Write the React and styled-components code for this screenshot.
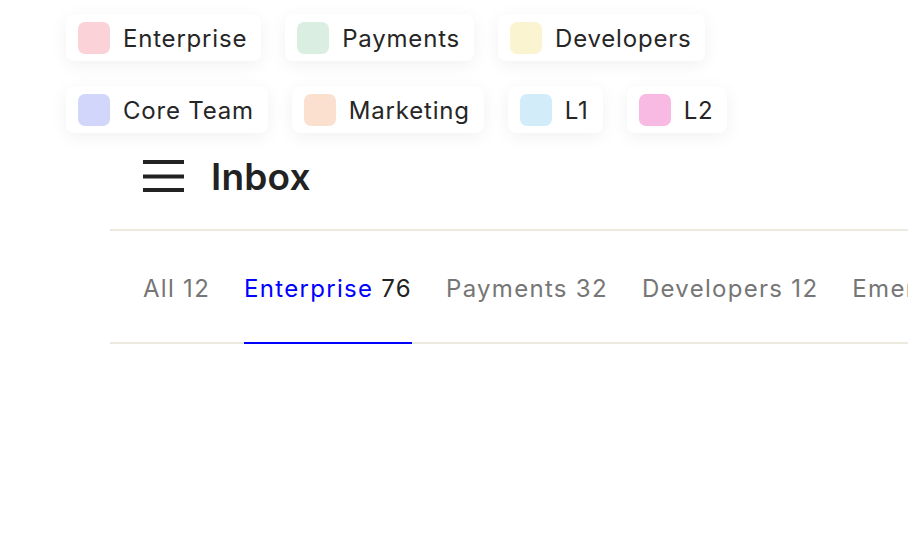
import styled, { createGlobalStyle } from "styled-components";

const labelRows = [
  [
    { name: "Enterprise", color: "#fbd2d8" },
    { name: "Payments", color: "#daeee2" },
    { name: "Developers", color: "#fbf4d0" },
  ],
  [
    { name: "Core Team", color: "#d2d6fb" },
    { name: "Marketing", color: "#fbdfcf" },
    { name: "L1", color: "#d2edf9" },
    { name: "L2", color: "#f8b9e2" },
  ],
];

const tabs = [
  { name: "All", count: 12 },
  { name: "Enterprise", count: 76, active: true },
  { name: "Payments", count: 32 },
  { name: "Developers", count: 12 },
  { name: "Emergency", count: 4 },
];

function App() {
  return (
    <>
      <GlobalStyle />
      <Page>
        <Labels>
          {labelRows.map((row, i) => (
            <LabelRow key={i}>
              {row.map((label) => (
                <Chip key={label.name}>
                  <Swatch $color={label.color} />
                  <ChipText>{label.name}</ChipText>
                </Chip>
              ))}
            </LabelRow>
          ))}
        </Labels>

        <Main>
          <Header>
            <MenuIcon width="41" height="32" viewBox="0 0 41 32">
              <rect x="0" y="0" width="41" height="4" fill="#222" />
              <rect x="0" y="14.5" width="41" height="4" fill="#222" />
              <rect x="0" y="28" width="41" height="4" fill="#222" />
            </MenuIcon>
            <Title>Inbox</Title>
          </Header>
          <Tabs>
            {tabs.map((tab) => (
              <Tab key={tab.name} $active={tab.active}>
                <TabName $active={tab.active}>{tab.name}</TabName>
                <Count $active={tab.active}>{tab.count}</Count>
              </Tab>
            ))}
          </Tabs>
        </Main>
      </Page>
    </>
  );
}
export default App;

const GlobalStyle = createGlobalStyle`
  html, body {
    margin: 0;
    padding: 0;
    background: #fff;
    font-family: Inter, "Noto Sans", sans-serif;
    overflow: hidden;
  }
`;

const Page = styled.div`
  width: 908px;
  height: 546px;
  overflow: hidden;
  background: #fff;
`;

const Labels = styled.div`
  display: flex;
  flex-direction: column;
  gap: 25px;
  padding: 14px 0 0 66px;
`;

const LabelRow = styled.div`
  display: flex;
  flex-direction: row;
  gap: 24px;
`;

const Chip = styled.div`
  display: flex;
  align-items: center;
  gap: 13px;
  height: 47px;
  box-sizing: border-box;
  padding: 0 14px 0 12px;
  border-radius: 8px;
  background: #fff;
  box-shadow: 0 4px 18px rgba(0, 0, 0, 0.06);
`;

const Swatch = styled.span`
  width: 32px;
  height: 32px;
  border-radius: 7px;
  background: ${({ $color }) => $color};
`;

const ChipText = styled.span`
  font-size: 24px;
  line-height: 28px;
  letter-spacing: 0.8px;
  color: #262626;
  margin-top: 2px;
`;

const Main = styled.div`
  margin-left: 110px;
`;

const Header = styled.div`
  display: flex;
  align-items: center;
  gap: 27px;
  height: 40px;
  padding: 23px 0 33px 33px;
  border-bottom: 2px solid #ece9df;
`;

const MenuIcon = styled.svg`
  display: block;
  flex-shrink: 0;
`;

const Title = styled.h1`
  margin: 0;
  font-size: 37px;
  font-weight: 600;
  line-height: 40px;
  letter-spacing: 0.2px;
  color: #222;
  padding-top: 2px;
`;

const Tabs = styled.div`
  display: flex;
  gap: 34px;
  padding-left: 33px;
  border-bottom: 2px solid #ece9df;
  white-space: nowrap;
`;

const Tab = styled.div`
  display: flex;
  gap: 8px;
  padding: 44px 0 39px;
  margin-bottom: -2px;
  font-size: 24px;
  line-height: 28px;
  letter-spacing: 1.3px;
  border-bottom: 2px solid ${({ $active }) => ($active ? "#0000ff" : "transparent")};
`;

const TabName = styled.span`
  color: ${({ $active }) => ($active ? "#0000ff" : "#767676")};
`;

const Count = styled.span`
  color: ${({ $active }) => ($active ? "#222" : "#767676")};
`;
